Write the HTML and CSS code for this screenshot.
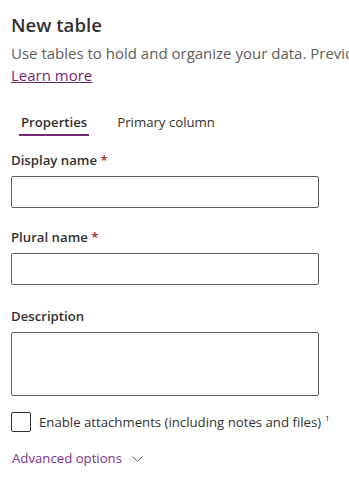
FILE: index.html
```html
<!DOCTYPE html>
<html lang="en">
<head>
<meta charset="utf-8">
<title>New table</title>
<link rel="stylesheet" href="styles.css">
</head>
<body>
<div class="panel">
  <h1 class="title">New table</h1>
  <p class="intro">Use tables to hold and organize your data. Previously called entities.<br><a class="link" href="#">Learn more</a></p>
  <div class="tabs">
    <span class="tab tab-active">Properties</span>
    <span class="tab">Primary column</span>
  </div>
  <div class="field field-first">
    <label class="label">Display name <span class="req">*</span></label>
    <div class="input"></div>
  </div>
  <div class="field">
    <label class="label">Plural name <span class="req">*</span></label>
    <div class="input"></div>
  </div>
  <div class="field field-desc">
    <label class="label">Description</label>
    <div class="input textarea"></div>
  </div>
  <div class="check-row">
    <span class="checkbox"></span>
    <span class="check-label">Enable attachments (including notes and files)<sup class="note">1</sup></span>
  </div>
  <div class="advanced">
    <span>Advanced options</span>
    <svg class="chev" width="11" height="6" viewBox="0 0 11 6"><path d="M0.5 0.5 L5.5 5.3 L10.5 0.5" fill="none" stroke="#605e5c" stroke-width="1"/></svg>
  </div>
</div>
</body>
</html>
```
FILE: styles.css
```css
html, body {
  margin: 0;
  padding: 0;
  overflow: hidden;
  background: #ffffff;
}
body {
  font-family: "Open Sans", "Noto Sans", sans-serif;
  color: #323130;
  font-size: 13.2px;
}
.panel {
  padding: 11px 0 0 11px;
  width: 308px;
}
.title {
  margin: 0;
  font-size: 18.6px;
  line-height: 28px;
  font-weight: 600;
  color: #323130;
}
.intro {
  margin: 3px 0 0;
  width: 700px;
  font-size: 15px;
  line-height: 22px;
  color: #605e5c;
  white-space: nowrap;
}
.link {
  color: #742774;
  text-decoration: underline;
}
.tabs {
  display: flex;
  gap: 26px;
  margin: 26px 0 0 8px;
}
.tab {
  font-size: 13.2px;
  line-height: 20px;
  padding: 0 2px 4px;
  color: #323130;
}
.tab-active {
  font-weight: 600;
  border-bottom: 2px solid #742774;
  padding-bottom: 2px;
}
.field {
  display: flex;
  flex-direction: column;
  gap: 6px;
  margin-top: 19px;
}
.field-first {
  margin-top: 14px;
}
.field-desc {
  margin-top: 21px;
}
.label {
  font-size: 13.2px;
  line-height: 20px;
  font-weight: 600;
  color: #323130;
}
.req {
  color: #a4262c;
}
.input {
  box-sizing: border-box;
  height: 32px;
  border: 1px solid #605e5c;
  border-radius: 2px;
}
.textarea {
  height: 64px;
}
.check-row {
  display: flex;
  align-items: flex-start;
  gap: 8px;
  margin-top: 16px;
}
.checkbox {
  box-sizing: border-box;
  width: 20px;
  height: 20px;
  border: 1px solid #323130;
  border-radius: 2px;
  flex: none;
}
.check-label {
  font-size: 13.2px;
  line-height: 20px;
  color: #323130;
  white-space: nowrap;
}
.note {
  font-size: 8px;
  margin-left: 4px;
  vertical-align: top;
  line-height: 12px;
}
.advanced {
  display: flex;
  align-items: center;
  gap: 10px;
  margin-top: 16px;
  margin-left: 1px;
  font-size: 13.2px;
  line-height: 20px;
  color: #7e2f8c;
}
.chev {
  margin-top: 1px;
}
```
